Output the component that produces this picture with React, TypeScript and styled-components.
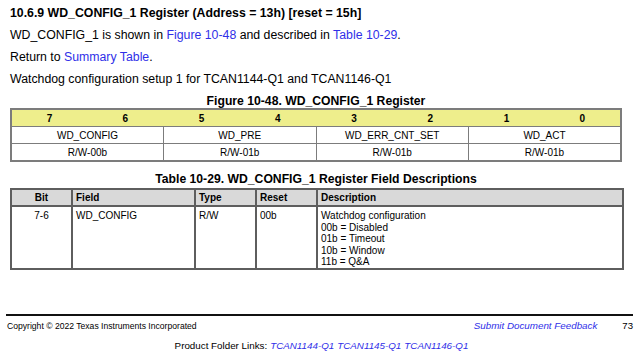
import styled, { createGlobalStyle } from "styled-components";

const GlobalStyle = createGlobalStyle`
  html, body {
    margin: 0;
    padding: 0;
    background: #ffffff;
  }
  body {
    font-family: "Liberation Sans", Arial, sans-serif;
    color: #000000;
  }
`;

const link = "#2f2fe8";

const Page = styled.div`
  width: 640px;
  height: 364px;
  display: flex;
  flex-direction: column;
  overflow: hidden;
`;

const Content = styled.div`
  padding: 2px 18px 0 10px;
  flex: 1;
`;

const Heading = styled.h3`
  margin: 0;
  font-size: 12.3px;
  font-weight: bold;
  line-height: 22px;
`;

const Para = styled.p`
  margin: 0;
  font-size: 12.3px;
  line-height: 22px;
`;

const Link = styled.a`
  color: ${link};
  text-decoration: none;
`;

const Caption = styled.div<{ $gap?: number }>`
  margin-top: ${(p) => p.$gap ?? 0}px;
  text-align: center;
  font-size: 12.2px;
  font-weight: bold;
  line-height: 14px;
  height: 14px;
`;

const RegTable = styled.table`
  width: 612px;
  border-collapse: collapse;
  table-layout: fixed;
  border: 2px solid #7c7c7c;
  font-size: 10px;
`;

const BitCell = styled.td`
  background: #eeee8c;
  text-align: center;
  font-weight: bold;
  height: 16px;
  padding: 0;
  border-bottom: 1px solid #7c7c7c;
`;

const RegCell = styled.td`
  text-align: center;
  height: 16px;
  padding: 0;
  border: 1px solid #7c7c7c;
`;

const FieldTable = styled.table`
  width: 612px;
  margin-top: 2px;
  border-collapse: collapse;
  table-layout: fixed;
  border: 2px solid #5e5e5e;
  font-size: 10px;
`;

const Th = styled.th<{ $center?: boolean }>`
  background: #d9d9d9;
  font-weight: bold;
  text-align: ${(p) => (p.$center ? "center" : "left")};
  height: 15px;
  padding: 0 3px;
  border: 2px solid #5e5e5e;
`;

const Td = styled.td<{ $center?: boolean }>`
  vertical-align: top;
  text-align: ${(p) => (p.$center ? "center" : "left")};
  height: 58px;
  padding: 3px 3px 0;
  line-height: 11.5px;
  border-left: 2px solid #5e5e5e;
`;

const Footer = styled.footer`
  padding: 0 7px 12px 6px;
`;

const FootBar = styled.div`
  border-top: 2px solid #111111;
  display: flex;
  justify-content: space-between;
  align-items: center;
  padding: 4px 0 0 1px;
  font-size: 8.6px;
  line-height: 12px;
`;

const FootRight = styled.div`
  display: flex;
  align-items: center;
  gap: 25px;
  font-size: 9.6px;
`;

const Feedback = styled.a`
  color: ${link};
  font-style: italic;
  font-size: 9.8px;
  text-decoration: none;
`;

const Folder = styled.div`
  margin-top: 8px;
  text-align: center;
  font-size: 9.8px;
  line-height: 12px;
  padding-left: 4px;
`;

const FolderLink = styled.a`
  color: ${link};
  font-style: italic;
  text-decoration: none;
  margin-left: 3px;
`;

const bits = [7, 6, 5, 4, 3, 2, 1, 0];
const fields = [
  { name: "WD_CONFIG", access: "R/W-00b" },
  { name: "WD_PRE", access: "R/W-01b" },
  { name: "WD_ERR_CNT_SET", access: "R/W-01b" },
  { name: "WD_ACT", access: "R/W-01b" },
];
const colWidths = [61, 123, 61, 61, 306];

const App = () => {
  return (
    <Page>
      <GlobalStyle />
      <Content>
        <Heading>10.6.9 WD_CONFIG_1 Register (Address = 13h) [reset = 15h]</Heading>
        <Para>
          WD_CONFIG_1 is shown in <Link href="#">Figure 10-48</Link> and described in{" "}
          <Link href="#">Table 10-29</Link>.
        </Para>
        <Para>
          Return to <Link href="#">Summary Table</Link>.
        </Para>
        <Para>Watchdog configuration setup 1 for TCAN1144-Q1 and TCAN1146-Q1</Para>

        <Caption $gap={4}>Figure 10-48. WD_CONFIG_1 Register</Caption>
        <RegTable>
          <tbody>
            <tr>
              {bits.map((b) => (
                <BitCell key={b}>{b}</BitCell>
              ))}
            </tr>
            <tr>
              {fields.map((f) => (
                <RegCell key={f.name} colSpan={2}>
                  {f.name}
                </RegCell>
              ))}
            </tr>
            <tr>
              {fields.map((f) => (
                <RegCell key={f.name} colSpan={2}>
                  {f.access}
                </RegCell>
              ))}
            </tr>
          </tbody>
        </RegTable>

        <Caption $gap={10}>Table 10-29. WD_CONFIG_1 Register Field Descriptions</Caption>
        <FieldTable>
          <colgroup>
            {colWidths.map((w, i) => (
              <col key={i} style={{ width: w }} />
            ))}
          </colgroup>
          <thead>
            <tr>
              <Th $center>Bit</Th>
              <Th>Field</Th>
              <Th>Type</Th>
              <Th>Reset</Th>
              <Th>Description</Th>
            </tr>
          </thead>
          <tbody>
            <tr>
              <Td $center>7-6</Td>
              <Td>WD_CONFIG</Td>
              <Td>R/W</Td>
              <Td>00b</Td>
              <Td>
                Watchdog configuration
                <br />
                00b = Disabled
                <br />
                01b = Timeout
                <br />
                10b = Window
                <br />
                11b = Q&amp;A
              </Td>
            </tr>
          </tbody>
        </FieldTable>
      </Content>

      <Footer>
        <FootBar>
          <span>Copyright © 2022 Texas Instruments Incorporated</span>
          <FootRight>
            <Feedback href="#">Submit Document Feedback</Feedback>
            <span>73</span>
          </FootRight>
        </FootBar>
        <Folder>
          Product Folder Links:
          <FolderLink href="#">TCAN1144-Q1</FolderLink>
          <FolderLink href="#">TCAN1145-Q1</FolderLink>
          <FolderLink href="#">TCAN1146-Q1</FolderLink>
        </Folder>
      </Footer>
    </Page>
  );
};

export default App;
